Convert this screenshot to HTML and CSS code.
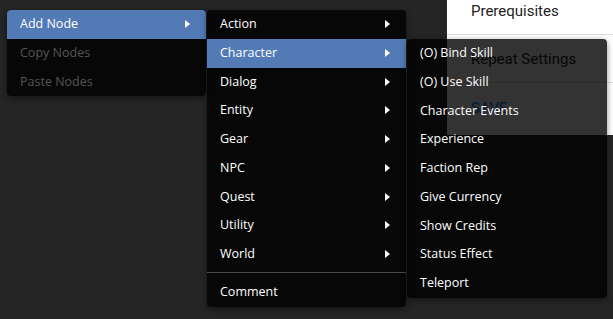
FILE: index.html
```html
<!DOCTYPE html>
<html>
<head>
<meta charset="utf-8">
<link rel="stylesheet" href="styles.css">
</head>
<body>
  <div class="page">
    <section class="panel">
      <div class="panel-row first">Prerequisites</div>
      <div class="panel-row">Repeat Settings</div>
      <div class="panel-row save">SAVE</div>
    </section>
  </div>

  <ul class="menu menu-root">
    <li class="item active sub">Add Node</li>
    <li class="item disabled">Copy Nodes</li>
    <li class="item disabled">Paste Nodes</li>
  </ul>

  <ul class="menu menu-add">
    <li class="item sub">Action</li>
    <li class="item active sub">Character</li>
    <li class="item sub">Dialog</li>
    <li class="item sub">Entity</li>
    <li class="item sub">Gear</li>
    <li class="item sub">NPC</li>
    <li class="item sub">Quest</li>
    <li class="item sub">Utility</li>
    <li class="item sub">World</li>
    <li class="divider"></li>
    <li class="item">Comment</li>
  </ul>

  <ul class="menu menu-char">
    <li class="item">(O) Bind Skill</li>
    <li class="item">(O) Use Skill</li>
    <li class="item">Character Events</li>
    <li class="item">Experience</li>
    <li class="item">Faction Rep</li>
    <li class="item">Give Currency</li>
    <li class="item">Show Credits</li>
    <li class="item">Status Effect</li>
    <li class="item">Teleport</li>
  </ul>
</body>
</html>
```

FILE: styles.css
```css
html, body {
  margin: 0;
  padding: 0;
  width: 613px;
  height: 319px;
  overflow: hidden;
  background: #252525;
}

.page {
  display: flex;
  justify-content: flex-end;
  height: 319px;
}

.panel {
  width: 166px;
  height: 135px;
  background: #ffffff;
  font-family: Roboto, "Liberation Sans", sans-serif;
  font-size: 15px;
  color: #222222;
}

.panel-row {
  height: 33px;
  padding: 14px 0 0 24px;
  line-height: 20px;
  border-bottom: 1px solid #dddddd;
}

.panel-row.first {
  height: 33px;
  padding-top: 1px;
}

.panel-row.save {
  border-bottom: none;
  color: #2a8ee8;
  font-weight: 500;
  padding-top: 15px;
  height: 20px;
}

.menu {
  position: absolute;
  margin: 0;
  padding: 0;
  list-style: none;
  width: 200px;
  background: rgba(0, 0, 0, 0.8);
  border-radius: 4px;
  box-shadow: 0 2px 6px rgba(0, 0, 0, 0.45);
  overflow: hidden;
  font-family: "Open Sans", "Noto Sans", sans-serif;
  font-size: 12.5px;
  color: #ffffff;
}

.menu-root {
  left: 7px;
  top: 10px;
  width: 199px;
}

.menu-add {
  left: 207px;
  top: 10px;
  width: 199px;
}

.menu-char {
  left: 407px;
  top: 39px;
}

.item {
  position: relative;
  height: 28.75px;
  line-height: 28.75px;
  padding-left: 13px;
  white-space: nowrap;
}

.item.active {
  background: #527ab5;
}

.item.disabled {
  color: #555555;
}

.item.sub::after {
  content: "";
  position: absolute;
  right: 16px;
  top: 10px;
  border-left: 5px solid #ffffff;
  border-top: 4.5px solid transparent;
  border-bottom: 4.5px solid transparent;
}

.divider {
  height: 1px;
  margin: 3px 0 5px;
  background: #4a4a4a;
}
```
